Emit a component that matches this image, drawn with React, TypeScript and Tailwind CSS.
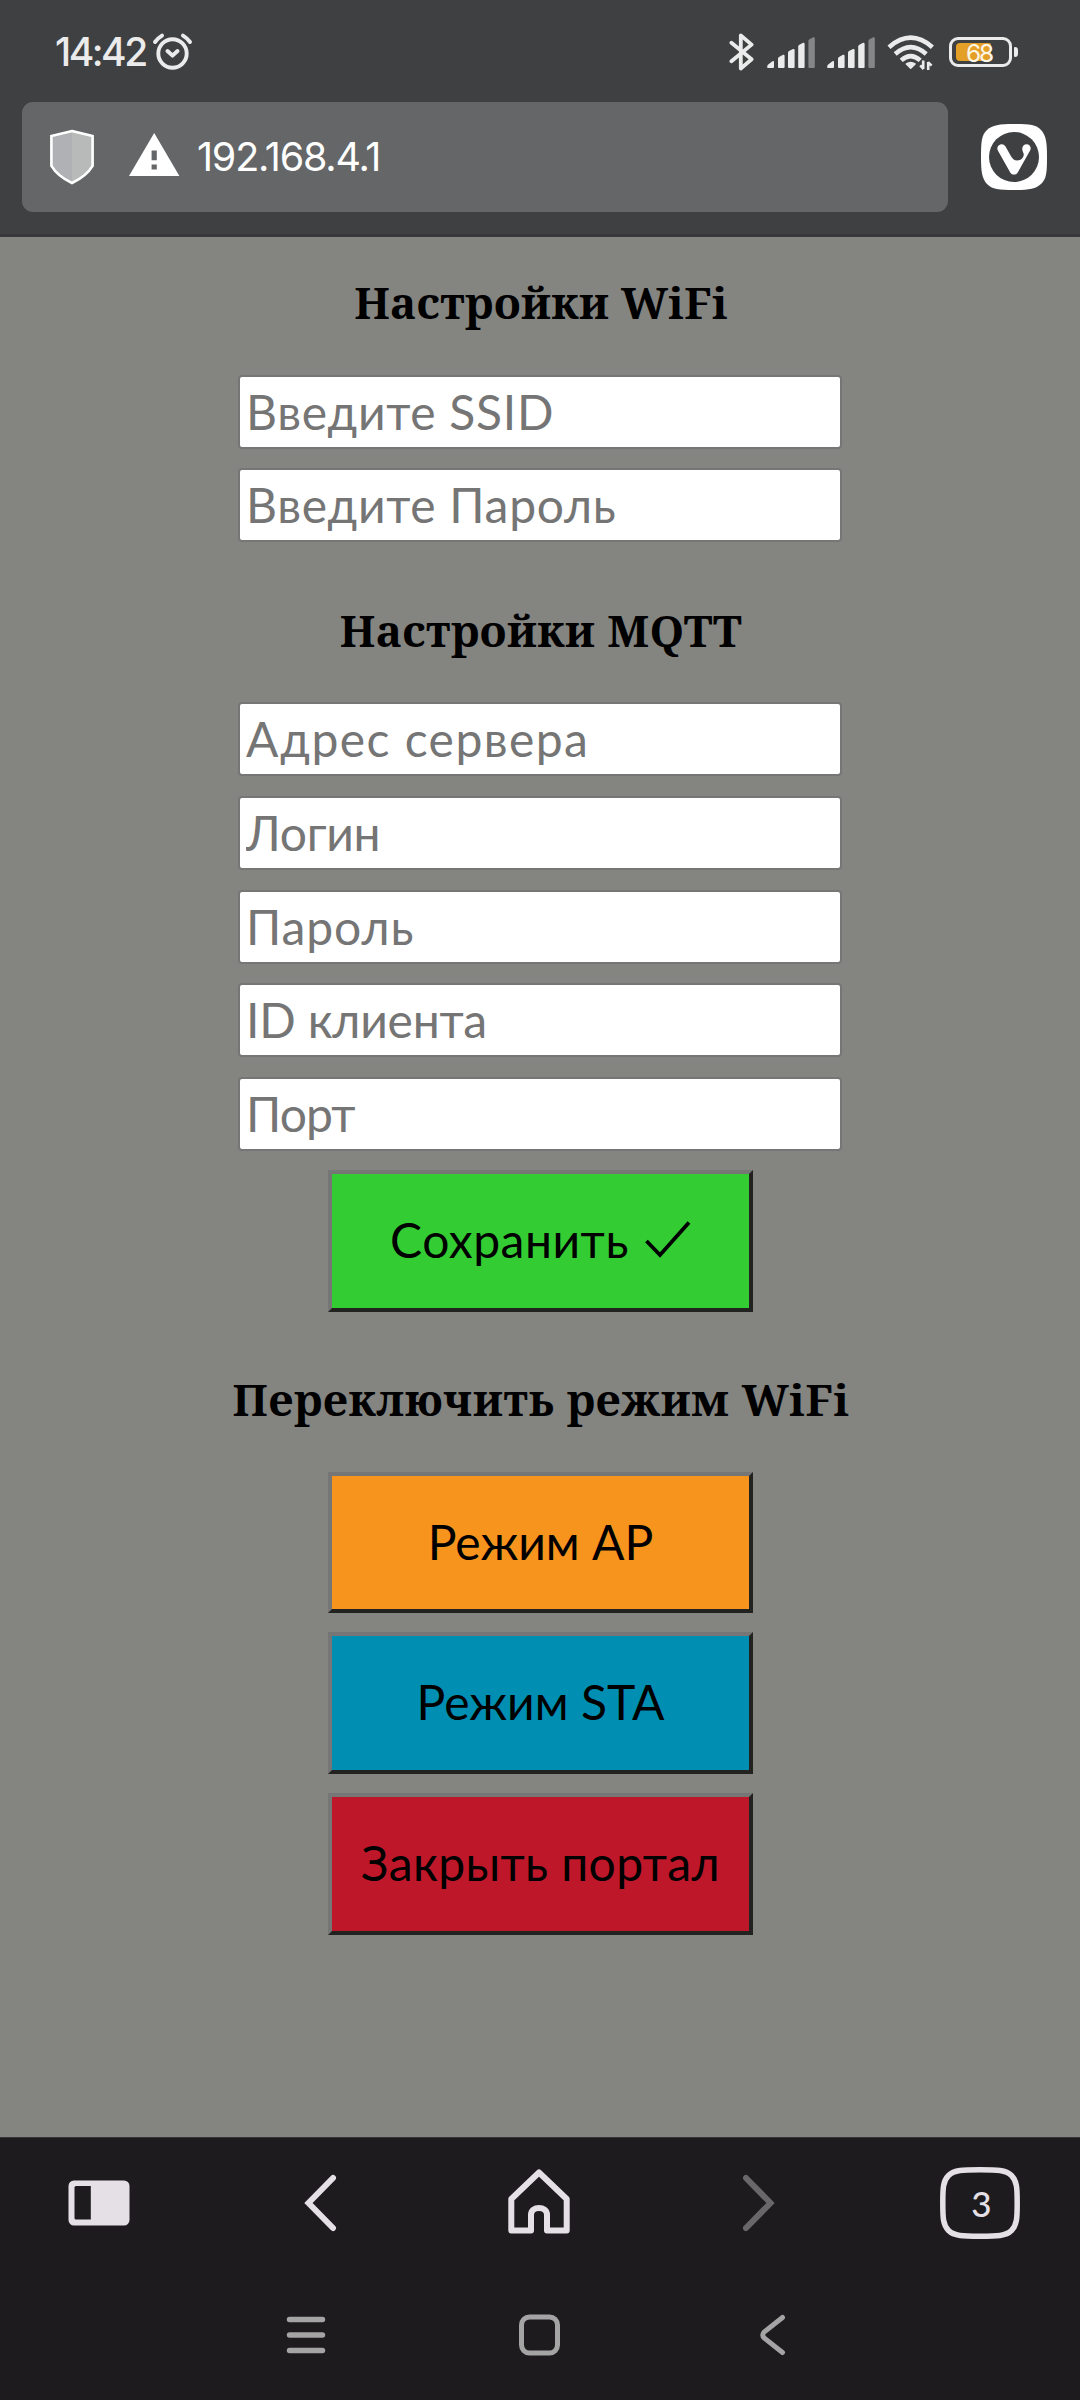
import type { ReactNode } from 'react'

function SignalBars() {
  return (
    <svg className="h-[32px] w-[48px]" viewBox="0 0 48 32">
      <g fill="#ebebeb">
        <path d="M.3 31V29Q.3 28 1.2 27.4L5.4 24.2Q7 23.4 7 25V30Q7 31 6 31H1Z" />
        <path d="M11 30V21.5Q11 20.5 12 20L16 17.8Q17.6 17.4 17.6 19V30Q17.6 31 16.6 31H12Q11 31 11 30Z" />
        <path d="M21 30V15.5Q21 14.5 22 14L26 12Q27.6 11.5 27.6 13V30Q27.6 31 26.6 31H22Q21 31 21 30Z" />
        <path d="M31.2 30V9.5Q31.2 8.5 32 8L36 5.8Q37.6 5.4 37.6 7V30Q37.6 31 36.6 31H32Q31.2 31 31.2 30Z" />
      </g>
      <path fill="#858688" d="M41.4 30V4Q41.4 3 42.2 2.4L46.2.3Q47.8-.2 47.8 1.4V30Q47.8 31 46.8 31H42.4Q41.4 31 41.4 30Z" />
    </svg>
  )
}

function StatusBar() {
  return (
    <div className="flex h-[102px] items-start pl-[55px] text-[#ebebeb]">
      <span className="mt-[32px] w-[96px] whitespace-nowrap font-['Inter',sans-serif] text-[39px] leading-[40px] font-medium tracking-[-2.5px]">14:42</span>
      <svg className="mt-[32px] ml-[1px] h-[40px] w-[42px]" viewBox="0 0 42 40" fill="none" stroke="#ebebeb" strokeLinecap="round" strokeLinejoin="round">
        <circle cx="20.5" cy="21.5" r="14.2" strokeWidth="3.9" />
        <path d="M15.5 19 20.5 23.6 25.5 19" strokeWidth="4" />
        <path d="M3 10Q6 6 10 3.6M38 10Q35 6 31 3.6" strokeWidth="4" />
      </svg>
      <svg className="mt-[32px] ml-[535px] h-[40px] w-[26px]" viewBox="0 0 26 40" fill="none" stroke="#ebebeb" strokeWidth="3.8" strokeLinecap="round" strokeLinejoin="round">
        <path d="M2.4 10.7 22.6 27.2 11.8 36.6V3.4L22.6 12.6 2.4 29.2" />
      </svg>
      <div className="mt-[37px] ml-[12px]"><SignalBars /></div>
      <div className="mt-[37px] ml-[12px]"><SignalBars /></div>
      <svg className="mt-[34px] ml-[12px] h-[38px] w-[48px]" viewBox="0 0 48 38" fill="none" stroke="#ebebeb" strokeWidth="4.6">
        <path d="M2 13.2Q23.7-5.8 45.4 13.2" />
        <path d="M8.2 20Q23.7 6.2 39.2 20" />
        <path d="M14.2 26.4Q23.7 18 33.2 26.4" />
        <path d="M19.4 30Q23.7 27 28 30L23.7 34.2Z" fill="#ebebeb" strokeWidth="1.6" strokeLinejoin="round" />
        <path d="M36.2 26.5V35M33.2 31.4 36.6 35M41.2 36V28M41 28.2 44.6 31.6" strokeWidth="2.6" />
      </svg>
      <div className="relative mt-[37px] ml-[14px] h-[30px] w-[63px] rounded-[9px] border-[3px] border-[#ebebeb]">
        <div className="mt-[3px] ml-[4px] h-[18px] w-[35px] rounded-l-[4px] rounded-r-[2px] bg-[#e49f27]" />
        <span className="absolute top-[1px] left-[14px] font-['Inter',sans-serif] text-[24.5px] leading-[24px] tracking-[-2.2px] text-[#fdf6e4]">68</span>
      </div>
      <div className="mt-[47px] ml-[2px] h-[10px] w-[4px] rounded-r-[3px] rounded-l-[1px] bg-[#ebebeb]" />
    </div>
  )
}

function AddressBar() {
  return (
    <div className="flex items-center pl-[22px]">
      <div className="flex h-[110px] w-[926px] items-center rounded-[11px] bg-[#656668] pl-[28px]">
        <svg className="h-[56px] w-[44px]" viewBox="0 0 44 56">
          <path d="M22 1.8 42.4 7V37Q36 47.5 22 54.2Z" fill="#b8bab9" />
          <path d="M22 1.8 1.6 7V37Q8 47.5 22 54.2Z" fill="#b0b1b4" />
          <path d="M22 2 42.6 7V36.8Q36.5 47 22 54 7.5 47 1.4 36.8V7Z" fill="none" stroke="#fff" strokeWidth="2.6" />
        </svg>
        <svg className="mt-[-5px] ml-[34.5px] h-[43px] w-[51px]" viewBox="0 0 51 43">
          <path fill="#fff" d="M25.2 0 50.4 43H0Z" />
          <path fill="#656668" d="M22.6 17.6h5.2v9.6h-5.2zM22.6 31.4h5.2v5h-5.2z" />
        </svg>
        <span className="ml-[17.5px] whitespace-nowrap font-['Inter',sans-serif] text-[39.5px] leading-[48px] tracking-[-1.2px] text-white">192.168.4.1</span>
      </div>
      <svg className="ml-[33px] h-[66px] w-[66px]" viewBox="0 0 66 66">
        <path fill="#fff" d="M33 0C48 0 55 .5 60 6S66 18 66 33 65.500 55 60 60 48 66 33 66 11 65.500 6 60 0 48 0 33 .5 11 6 6 18 0 33 0Z" />
        <circle cx="33" cy="33" r="25" fill="#3f4042" />
        <path fill="#fff" d="M16.700 26.200C15.200 22.500 18.600 20.200 20.800 20.200 22.700 20.200 23.700 21.200 24.500 22.600L29.600 31.500C31.200 34.500 33.200 36.600 36.200 36.600 40.200 36.600 43 33.600 42.700 30.100 42.600 28.600 41.300 27.200 41.200 24.900 41.200 22.100 43.200 20.200 45.600 20.200 48.900 20.200 50.600 23.400 49.200 26.200L36.600 48.700C35.100 51.200 30.900 51.200 29.400 48.700Z" />
      </svg>
    </div>
  )
}

function Heading({ className, children }: { className: string; children: ReactNode }) {
  return <h3 className={`h-[60px] pl-[2px] whitespace-nowrap font-['Noto_Serif',serif] text-[44px] leading-[60px] font-bold text-black ${className}`}>{children}</h3>
}

function Field({ label, className = '' }: { label: string; className?: string }) {
  return (
    <input
      placeholder={label}
      className={`block h-[74px] w-[604px] rounded-[4px] border-2 border-[#767676] bg-white pt-0 pr-[4px] pb-[2px] pl-[6px] font-['Lato',sans-serif] text-[48px] outline-none placeholder:text-[#757575] ${className}`}
    />
  )
}

function Action({ className, children }: { className: string; children: ReactNode }) {
  return (
    <button className={`flex w-[425px] items-center justify-center border-4 border-t-[#767676] border-r-[#222220] border-b-[#222220] border-l-[#767676] pb-[2px] pl-[1px] font-['Lato',sans-serif] text-[48px] whitespace-nowrap text-black ${className}`}>
      {children}
    </button>
  )
}

function BrowserNav() {
  return (
    <div className="flex h-[134px] items-center border-t border-[#38363a] pb-[3px]">
      <svg className="ml-[68px] h-[46px] w-[62px]" viewBox="0 0 62 46">
        <rect x=".5" y=".5" width="61" height="45" rx="5.500" fill="#e5e0e6" />
        <path d="M8 6H22.800V39.500H8Q6.500 39.500 6.500 38V7.500Q6.500 6 8 6Z" fill="#1e1b1e" />
      </svg>
      <svg className="ml-[174px] h-[58px] w-[33px]" viewBox="0 -1 33 58" fill="none" stroke="#e5e0e6" strokeWidth="6" strokeLinecap="round">
        <path d="M29 3 4.500 28 29 53" />
      </svg>
      <svg className="mt-[-2px] ml-[171px] h-[66px] w-[62px]" viewBox="0 0 62 66" fill="none" stroke="#e5e0e6" strokeWidth="6" strokeLinejoin="round">
        <path d="M3.300 30 31 3.500 58.700 30V61.500H39V46C39 36.500 23 36.500 23 46V61.500H3.300Z" />
      </svg>
      <svg className="ml-[173px] h-[58px] w-[33px]" viewBox="0 -1 33 58" fill="none" stroke="#6a676a" strokeWidth="6" strokeLinecap="round">
        <path d="M3 3 27.500 28 3 53" />
      </svg>
      <div className="relative ml-[164px] h-[72px] w-[80px]">
        <svg className="h-[72px] w-[80px]" viewBox="0 0 80 72" fill="none" stroke="#e5e0e6" strokeWidth="5.500">
          <path d="M40 2.800C57 2.800 66 3 71.500 8.500S77.200 21 77.200 36 77 58 71.500 63.500 57 69.200 40 69.200 14 69 8.500 63.500 2.800 51 2.800 36 3 14 8.500 8.500 23 2.800 40 2.800Z" />
        </svg>
        <span className="absolute inset-0 flex items-center justify-center pl-[3px] font-['Lato',sans-serif] text-[35px] leading-[40px] font-medium text-[#e5e0e6]">3</span>
      </div>
    </div>
  )
}

function SystemNav() {
  return (
    <div className="flex h-[129px] items-center pb-[2px]">
      <svg className="ml-[286px] h-[42px] w-[40px]" viewBox="0 0 40 42" stroke="#a4a4a4" strokeWidth="5.400" strokeLinecap="round">
        <path d="M3.500 5.500H36.500M3.500 21H36.500M3.500 36.500H36.500" />
      </svg>
      <svg className="ml-[192.5px] h-[42px] w-[41px]" viewBox="0 0 41 42" fill="none" stroke="#a4a4a4" strokeWidth="5">
        <rect x="2.500" y="3" width="36" height="36" rx="8" />
      </svg>
      <svg className="ml-[200px] h-[42px] w-[26px]" viewBox="0 0 26 42" fill="none" stroke="#a4a4a4" strokeWidth="5" strokeLinecap="round">
        <path d="M22.500 3.500 4.400 17.800Q1 21 4.400 24.200L22.500 38.500" />
      </svg>
    </div>
  )
}

export default function App() {
  return (
    <div className="flex h-[2400px] w-[1080px] flex-col overflow-hidden bg-[#848481]">
      <header className="h-[237px] shrink-0 border-b-[3px] border-[#38373b] bg-[#3f4042]">
        <StatusBar />
        <AddressBar />
      </header>
      <main className="flex flex-1 flex-col items-center pt-[35px]">
        <Heading className="tracking-[0.4px]">Настройки WiFi</Heading>
        <div className="mt-[43px] flex flex-col gap-[19px]">
          <Field label="Введите SSID" className="tracking-[0.7px]" />
          <Field label="Введите Пароль" className="tracking-[0.7px]" />
        </div>
        <Heading className="mt-[58px] tracking-[0.45px]">Настройки MQTT</Heading>
        <div className="mt-[42px] flex flex-col gap-[20px]">
          <Field label="Адрес сервера" className="tracking-[1.45px]" />
          <Field label="Логин" className="tracking-[-0.3px]" />
          <Field label="Пароль" className="tracking-[0.9px]" />
          <div className="mt-[-1px] flex flex-col gap-[20px]">
            <Field label="ID клиента" className="tracking-[-0.2px]" />
            <Field label="Порт" className="tracking-[-0.9px]" />
          </div>
        </div>
        <Action className="mt-[19px] h-[142px] bg-[#33cd33] tracking-[0.5px]">
          Сохранить
          <svg className="mt-[-2px] ml-[16px] h-[38px] w-[46px]" viewBox="0 0 46 38" fill="none" stroke="#000" strokeWidth="3.800">
            <path d="M1.500 21 15 35 44 2.500" />
          </svg>
        </Action>
        <Heading className="mt-[57px] tracking-[0.68px]">Переключить режим WiFi</Heading>
        <div className="mt-[43px] flex flex-col gap-[19px]">
          <Action className="h-[141px] bg-[#f7941e]">Режим AP</Action>
          <Action className="h-[142px] bg-[#008eb2]">Режим STA</Action>
          <Action className="h-[142px] bg-[#be172a] tracking-[0.4px]">Закрыть портал</Action>
        </div>
      </main>
      <footer className="h-[263px] shrink-0 bg-[#1e1b1e]">
        <BrowserNav />
        <SystemNav />
      </footer>
    </div>
  )
}
